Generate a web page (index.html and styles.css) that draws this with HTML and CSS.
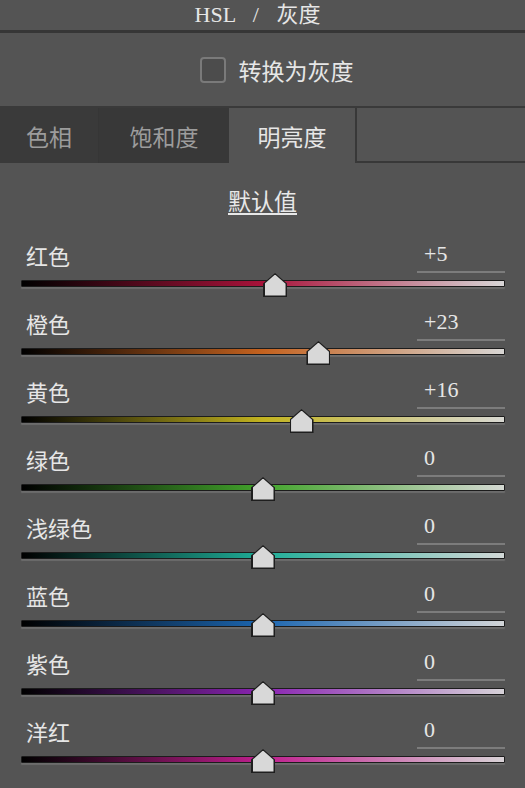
FILE: index.html
```html
<!DOCTYPE html>
<html lang="zh-CN">
<head>
    <meta charset="UTF-8">
    <meta name="viewport" content="width=device-width, initial-scale=1.0">
    <title>HSL / 灰度</title>
    <link rel="stylesheet" href="styles.css">
</head>
<body>

    <!-- Panel Header -->
    <header class="panel-title">HSL / 灰度</header>

    <!-- Grayscale Toggle -->
    <section class="gray-toggle">
        <span class="checkbox"></span>
        <span class="gray-label">转换为灰度</span>
    </section>

    <!-- Tabs -->
    <nav class="tabs">
        <div class="tab tab-hue">色相</div>
        <div class="tab tab-sat">饱和度</div>
        <div class="tab tab-lum active">明亮度</div>
        <div class="tab-rest"></div>
    </nav>

    <div class="defaults"><a href="#">默认值</a></div>

    <!-- Sliders -->
    <div class="sliders">
        <div class="row">
            <div class="row-head"><span class="name">红色</span><span class="value">+5</span></div>
            <div class="track red"><span class="thumb" style="left: 52.5%"></span></div>
        </div>
        <div class="row">
            <div class="row-head"><span class="name">橙色</span><span class="value">+23</span></div>
            <div class="track orange"><span class="thumb" style="left: 61.5%"></span></div>
        </div>
        <div class="row">
            <div class="row-head"><span class="name">黄色</span><span class="value">+16</span></div>
            <div class="track yellow"><span class="thumb" style="left: 58%"></span></div>
        </div>
        <div class="row">
            <div class="row-head"><span class="name">绿色</span><span class="value">0</span></div>
            <div class="track green"><span class="thumb" style="left: 50%"></span></div>
        </div>
        <div class="row">
            <div class="row-head"><span class="name">浅绿色</span><span class="value">0</span></div>
            <div class="track aqua"><span class="thumb" style="left: 50%"></span></div>
        </div>
        <div class="row">
            <div class="row-head"><span class="name">蓝色</span><span class="value">0</span></div>
            <div class="track blue"><span class="thumb" style="left: 50%"></span></div>
        </div>
        <div class="row">
            <div class="row-head"><span class="name">紫色</span><span class="value">0</span></div>
            <div class="track purple"><span class="thumb" style="left: 50%"></span></div>
        </div>
        <div class="row">
            <div class="row-head"><span class="name">洋红</span><span class="value">0</span></div>
            <div class="track magenta"><span class="thumb" style="left: 50%"></span></div>
        </div>
    </div>

</body>
</html>
```

FILE: styles.css
```css
/* General Styles */
body {
    margin: 0;
    padding: 0;
    background-color: #545454;
    color: #e6e6e6;
    font-family: "Liberation Serif", "Noto Sans CJK SC", serif;
    font-size: 22px;
    overflow: hidden;
}

/* Header */
.panel-title {
    height: 30px;
    line-height: 30px;
    text-align: center;
    padding-right: 10px;
    font-size: 22px;
    word-spacing: 12px;
    border-bottom: 3px solid #363636;
}

/* Grayscale Toggle */
.gray-toggle {
    height: 73px;
    display: flex;
    justify-content: center;
    align-items: center;
    gap: 13px;
    padding-left: 28px;
}

.checkbox {
    width: 22px;
    height: 22px;
    border: 2px solid #7a7a7a;
    border-radius: 4px;
    background-color: #4c4c4c;
}

.gray-label {
    font-size: 23px;
}

/* Tabs */
.tabs {
    display: flex;
    height: 55px;
    border-top: 2px solid #3a3a3a;
}

.tab {
    display: flex;
    justify-content: center;
    align-items: center;
    font-size: 23px;
    color: #9c9c9c;
    background-color: #3a3a3a;
}

.tab-hue {
    width: 98px;
    border-right: 1px solid #363636;
}

.tab-sat {
    width: 130px;
    background-color: #383838;
}

.tab-lum {
    width: 126px;
}

.tab.active {
    background-color: #545454;
    color: #e6e6e6;
}

.tab-rest {
    flex: 1;
    border-left: 2px solid #383838;
    border-bottom: 2px solid #383838;
}

/* Default link */
.defaults {
    height: 75px;
    display: flex;
    justify-content: center;
    align-items: center;
    padding-bottom: 2px;
    box-sizing: border-box;
}

.defaults a {
    color: #e8e8e8;
    font-size: 23px;
    text-decoration: underline;
    text-underline-offset: 3px;
}

/* Sliders */
.sliders {
    padding: 0 20px 0 21px;
}

.row {
    height: 68px;
}

.row-head {
    display: flex;
    justify-content: space-between;
    align-items: center;
    height: 34px;
}

.name {
    padding-left: 5px;
    font-size: 22px;
}

.value {
    width: 81px;
    height: 34px;
    line-height: 34px;
    padding-left: 7px;
    border-bottom: 2px solid #7c7c7c;
    font-size: 22px;
}

.track {
    position: relative;
    height: 5px;
    margin-top: 8px;
    border: 1px solid #1c1c1c;
    border-radius: 1px;
    box-shadow: 0 2px 1px #6c6c6c;
}

.thumb {
    position: absolute;
    top: -8px;
    width: 24px;
    height: 24px;
    transform: translateX(-50%);
    background-color: #1e1e1e;
    clip-path: polygon(50% 0, 100% 44%, 100% 100%, 0 100%, 0 44%);
}

.thumb::after {
    content: "";
    position: absolute;
    inset: 1.5px 1.5px 1.5px 1.5px;
    background-color: #d8d8d8;
    clip-path: polygon(50% 0, 100% 44%, 100% 100%, 0 100%, 0 44%);
}

.red { background: linear-gradient(to right, #000, #a8133a 50%, #d8d6d7); }
.orange { background: linear-gradient(to right, #000, #c4621f 50%, #d8d6d4); }
.yellow { background: linear-gradient(to right, #000, #c2b320 50%, #d8d8d2); }
.green { background: linear-gradient(to right, #000, #43a52c 50%, #d4d8d2); }
.aqua { background: linear-gradient(to right, #000, #1fae98 50%, #d2d8d7); }
.blue { background: linear-gradient(to right, #000, #1c66b0 50%, #d2d5d8); }
.purple { background: linear-gradient(to right, #000, #8a24b2 50%, #d6d2d8); }
.magenta { background: linear-gradient(to right, #000, #c01f8e 50%, #d8d2d6); }
```
